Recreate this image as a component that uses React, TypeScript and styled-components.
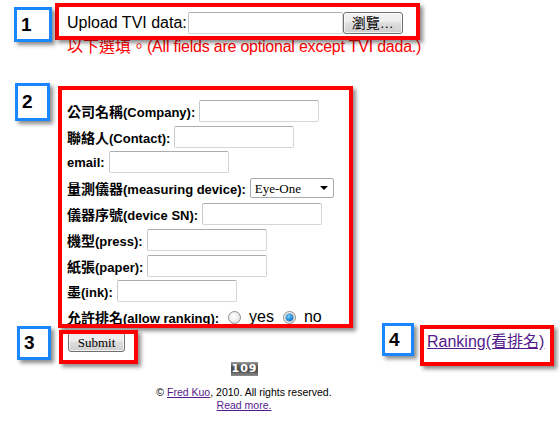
import React from "react";
import styled, { createGlobalStyle } from "styled-components";

const GlobalStyle = createGlobalStyle`
  html, body { margin: 0; padding: 0; background: #fff; }
  body { font-family: "Liberation Sans", Arial, "Noto Sans CJK TC", sans-serif; color: #000; }
`;

const Canvas = styled.div`
  position: relative;
  width: 559px;
  height: 433px;
  overflow: hidden;
  background: #fff;
`;

const Page = styled.div`
  width: 354px;
  margin-left: 67px;
  padding-top: 12px;
`;

const UploadRow = styled.div`
  display: flex;
  align-items: center;
  height: 22px;
  font-size: 16px;
  white-space: nowrap;
`;

const UploadLabel = styled.span`
  margin-right: 1px;
`;

const inputBox = `
  box-sizing: border-box;
  flex-shrink: 0;
  height: 22px;
  border: 1px solid #d2d5da;
  border-top-color: #abadb3;
  border-left-color: #c7cacf;
  border-radius: 2px;
  background: #fff;
  padding: 0 3px;
  margin: 0;
  outline: none;
`;

const FileField = styled.input`
  ${inputBox}
  width: 155px;
`;

const GrayButton = styled.button<{ $w: number; $h: number; $serif?: boolean }>`
  box-sizing: border-box;
  flex-shrink: 0;
  width: ${(p) => p.$w}px;
  height: ${(p) => p.$h}px;
  margin: 0;
  padding: 0;
  border: 1px solid #707070;
  border-radius: 3px;
  background: linear-gradient(#f2f2f2 0%, #ebebeb 45%, #dddddd 50%, #cfcfcf 100%);
  box-shadow: inset 0 0 0 1px rgba(255, 255, 255, 0.7);
  font-family: ${(p) =>
    p.$serif
      ? `"Liberation Serif", "Times New Roman", serif`
      : `"Liberation Sans", Arial, "Noto Sans CJK TC", sans-serif`};
  font-size: ${(p) => (p.$serif ? 13 : 14)}px;
  color: #000;
  line-height: 1;
`;

const Note = styled.div`
  margin-top: 3px;
  font-size: 16px;
  line-height: 19px;
  color: #f00;
  white-space: nowrap;
`;

const NoteLatin = styled.span`
  letter-spacing: -0.22px;
`;

const Form = styled.div`
  margin-top: 42px;
  display: flex;
  flex-direction: column;
`;

const Row = styled.div`
  display: flex;
  align-items: center;
  gap: 4px;
  height: 25.8px;
  font-size: 13px;
  font-weight: bold;
  white-space: nowrap;
`;

const Label = styled.span`
  font-family: "Liberation Sans", Arial, "Noto Sans CJK TC", sans-serif;
`;

const Zh = styled.span`
  font-size: 14px;
`;

const TextInput = styled.input`
  ${inputBox}
  width: 120px;
`;

const SelectWrap = styled.div`
  position: relative;
  flex-shrink: 0;
  width: 84px;
  height: 20px;
  &::after {
    content: "";
    position: absolute;
    right: 6px;
    top: 8px;
    border-left: 4px solid transparent;
    border-right: 4px solid transparent;
    border-top: 4px solid #000;
    pointer-events: none;
  }
`;

const Select = styled.select`
  appearance: none;
  -webkit-appearance: none;
  box-sizing: border-box;
  width: 84px;
  height: 20px;
  margin: 0;
  padding: 0 0 0 4px;
  border: 1px solid #a6abb3;
  border-radius: 2px;
  background: #fff;
  font-family: "Liberation Serif", "Times New Roman", serif;
  font-size: 13px;
  color: #000;
  outline: none;
`;

const RadioLabel = styled.label`
  display: flex;
  align-items: center;
  font-weight: normal;
  font-size: 16px;
  margin-left: 5px;
  gap: 8px;
  & + & {
    margin-left: 5px;
  }
`;

const Radio = styled.input`
  appearance: none;
  -webkit-appearance: none;
  box-sizing: border-box;
  width: 13px;
  height: 13px;
  margin: 0;
  border: 1px solid #8e8f8f;
  border-radius: 50%;
  background: radial-gradient(circle at 40% 40%, #ffffff 0%, #f0f0f0 45%, #d4d4d4 100%);
  position: relative;
  &:checked::after {
    content: "";
    position: absolute;
    left: 2px;
    top: 2px;
    width: 7px;
    height: 7px;
    border-radius: 50%;
    background: radial-gradient(circle at 40% 35%, #7fd0ff 0%, #1d8ad9 55%, #0b4f93 100%);
    box-shadow: 0 0 0 0.5px #3d6f9d;
  }
`;

const SubmitRow = styled.div`
  display: flex;
  align-items: center;
  height: 20px;
  margin-top: 2px;
  padding-left: 1px;
  white-space: nowrap;
`;

const RankingLink = styled.a`
  flex-shrink: 0;
  margin-left: 302px;
  font-size: 16px;
  line-height: 18px;
  color: #551a8b;
  text-decoration: underline;
`;

const Counter = styled.div`
  width: 27px;
  height: 14px;
  margin: 10px auto 0;
  background: linear-gradient(#9a9a9a 0%, #5a5a5a 30%, #4a4a4a 60%, #8d8d8d 100%);
  color: #fff;
  font-family: "DejaVu Sans", Verdana, sans-serif;
  font-weight: bold;
  font-size: 11px;
  line-height: 14px;
  letter-spacing: 1px;
  text-align: center;
  text-indent: 1px;
`;

const Footer = styled.div`
  margin-top: 10px;
  font-size: 10.5px;
  line-height: 13px;
  text-align: center;
  white-space: nowrap;
`;

const FooterLink = styled.a`
  color: #551a8b;
  text-decoration: underline;
`;

const Callout = styled.div<{ $x: number; $y: number; $w: number; $h: number }>`
  position: absolute;
  left: ${(p) => p.$x}px;
  top: ${(p) => p.$y}px;
  width: ${(p) => p.$w}px;
  height: ${(p) => p.$h}px;
  box-sizing: border-box;
  border: 4px solid #ff0000;
  box-shadow: 3px 3px 4px rgba(0, 0, 0, 0.45);
  pointer-events: none;
`;

const Badge = styled.div<{ $x: number; $y: number; $w: number; $h: number }>`
  position: absolute;
  left: ${(p) => p.$x}px;
  top: ${(p) => p.$y}px;
  width: ${(p) => p.$w}px;
  height: ${(p) => p.$h}px;
  box-sizing: border-box;
  border: 3px solid #1a86ff;
  background: #fff;
  box-shadow: 3px 3px 4px rgba(0, 0, 0, 0.45);
  display: flex;
  align-items: center;
  padding-left: 4px;
  font-family: "Liberation Sans", Arial, sans-serif;
  font-weight: bold;
  font-size: 19px;
  color: #000;
`;

const fields: { zh: string; en: string; kind: "text" | "select" }[] = [
  { zh: "公司名稱", en: "(Company):", kind: "text" },
  { zh: "聯絡人", en: "(Contact):", kind: "text" },
  { zh: "", en: "email:", kind: "text" },
  { zh: "量測儀器", en: "(measuring device):", kind: "select" },
  { zh: "儀器序號", en: "(device SN):", kind: "text" },
  { zh: "機型", en: "(press):", kind: "text" },
  { zh: "紙張", en: "(paper):", kind: "text" },
  { zh: "墨", en: "(ink):", kind: "text" },
];

export default function App() {
  return (
    <Canvas>
      <GlobalStyle />
      <Page>
        <UploadRow>
          <UploadLabel>Upload TVI data:</UploadLabel>
          <FileField type="text" readOnly />
          <GrayButton $w={60} $h={22}>瀏覽…</GrayButton>
        </UploadRow>
        <Note>
          以下選填。<NoteLatin>(All fields are optional except TVI dada.)</NoteLatin>
        </Note>
        <Form>
          {fields.map((f) => (
            <Row key={f.en}>
              <Label>
                {f.zh && <Zh>{f.zh}</Zh>}
                {f.en}
              </Label>
              {f.kind === "text" ? (
                <TextInput type="text" />
              ) : (
                <SelectWrap>
                  <Select defaultValue="Eye-One">
                    <option>Eye-One</option>
                  </Select>
                </SelectWrap>
              )}
            </Row>
          ))}
          <Row>
            <Label>
              <Zh>允許排名</Zh>(allow ranking):
            </Label>
            <RadioLabel>
              <Radio type="radio" name="rank" />
              yes
            </RadioLabel>
            <RadioLabel>
              <Radio type="radio" name="rank" defaultChecked />
              no
            </RadioLabel>
          </Row>
        </Form>
        <SubmitRow>
          <GrayButton $w={57} $h={20} $serif>Submit</GrayButton>
          <RankingLink href="#">Ranking(看排名)</RankingLink>
        </SubmitRow>
        <Counter>109</Counter>
        <Footer>
          © <FooterLink href="#">Fred Kuo</FooterLink>, 2010. All rights reserved.
          <br />
          <FooterLink href="#">Read more.</FooterLink>
        </Footer>
      </Page>

      <Callout $x={55} $y={3} $w={365} $h={37} />
      <Callout $x={58} $y={86} $w={295} $h={242} />
      <Callout $x={59} $y={330} $w={79} $h={34} />
      <Callout $x={420} $y={325} $w={134} $h={41} />

      <Badge $x={14} $y={7} $w={38} $h={35}>1</Badge>
      <Badge $x={15} $y={83} $w={35} $h={38}>2</Badge>
      <Badge $x={17} $y={326} $w={34} $h={34}>3</Badge>
      <Badge $x={382} $y={323} $w={32} $h={33}>4</Badge>
    </Canvas>
  );
}
